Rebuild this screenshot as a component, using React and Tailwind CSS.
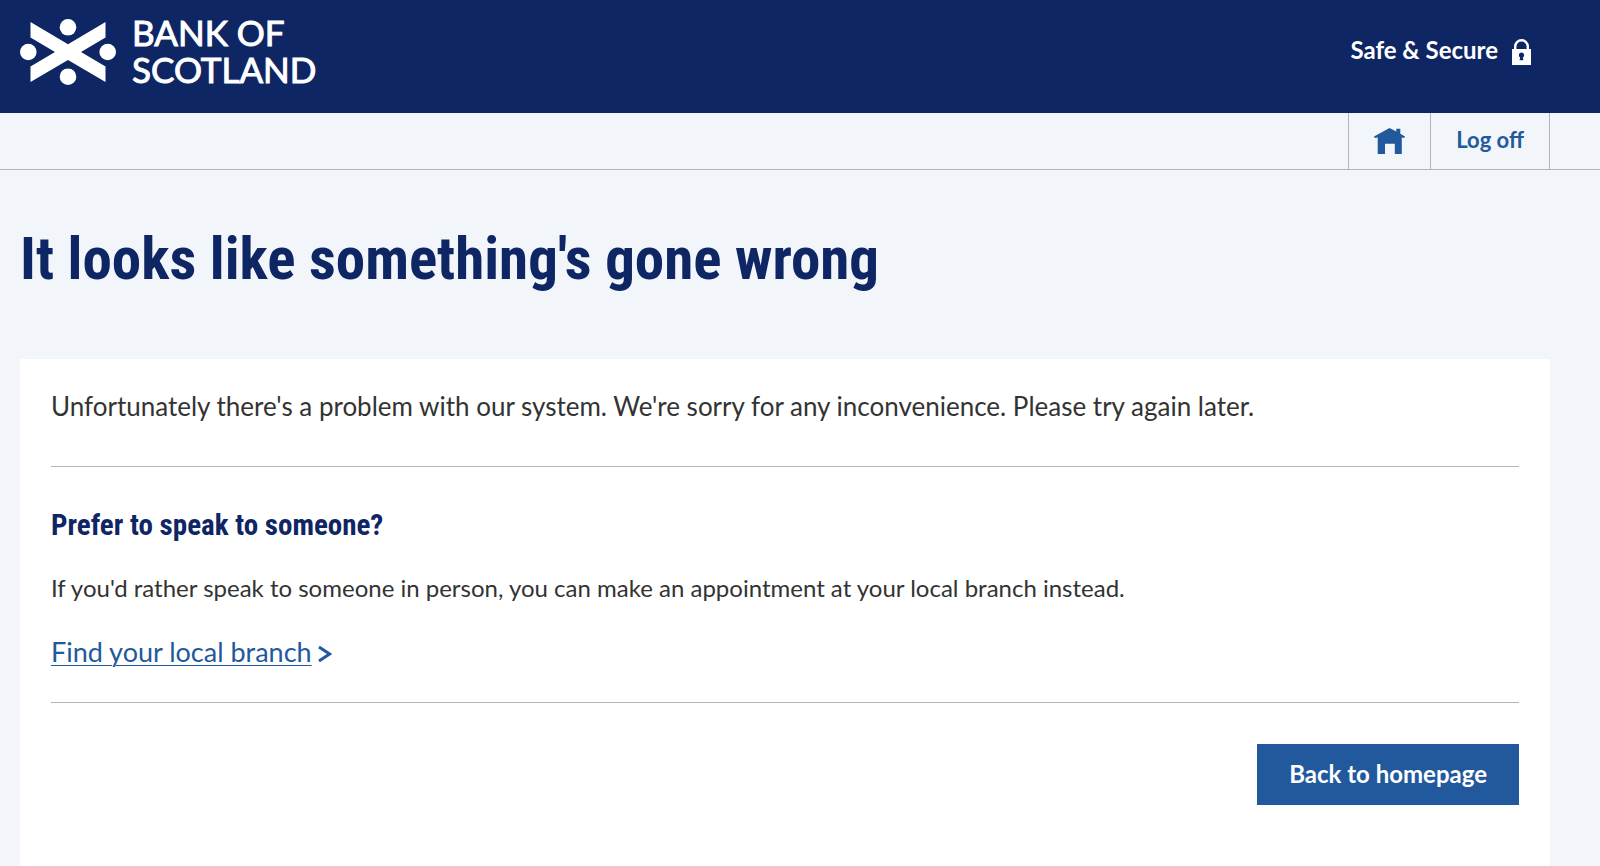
function Logo() {
  return (
    <svg viewBox="0 0 96 66" className="mt-0.5 h-[66px] w-24" fill="currentColor" aria-hidden="true">
      <path d="M10.500 3 48 25.200 85.500 3V18.500L61 33 85.500 47.500V63L48 41 10.500 63V47.500L35 33 10.500 18.500Z" />
      <circle cx="48" cy="8.300" r="8.300" />
      <circle cx="48" cy="57.700" r="8.300" />
      <circle cx="8.300" cy="33" r="8.300" />
      <circle cx="87.700" cy="33" r="8.300" />
    </svg>
  )
}

function LockIcon() {
  return (
    <svg viewBox="0 0 19 26" className="mt-1 h-[26px] w-[19px]" aria-hidden="true">
      <path d="M3.200 12V7.500a6.300 6.300 0 0 1 12.600 0V12" fill="none" stroke="#fff" strokeWidth="2.400" />
      <path d="M0 10H19V26H0Z" fill="#fff" />
      <path d="M9.500 13.500a2.700 2.700 0 0 0-1.400 5L7.600 21.300H11.400L10.900 18.500a2.700 2.700 0 0 0-1.400-5Z" fill="#0f2664" />
    </svg>
  )
}

function HomeIcon() {
  return (
    <svg viewBox="0 0 31 26" className="h-[26px] w-[31px]" fill="currentColor" aria-hidden="true">
      <path d="M15.500 0 22.300 3.600V0.800H26.300V5.800L31 8.500 30.200 10 27.800 9.400V26H20.800V15.700H11V26H3.700V9.400L0.800 10 0 8.500Z" />
    </svg>
  )
}

function Header() {
  return (
    <header className="flex items-start justify-between bg-[#0f2664] pt-[14px] pr-[69px] pb-[25px] pl-5 text-white">
      <a href="#" className="flex items-center gap-4">
        <Logo />
        <span className="text-[35px] leading-[37px] [-webkit-text-stroke:1px_white]">
          BANK OF
          <br />
          SCOTLAND
        </span>
      </a>
      <div className="flex items-center gap-[14px] pt-5">
        <span className="text-2xl font-bold">Safe &amp; Secure</span>
        <LockIcon />
      </div>
    </header>
  )
}

function NavBar() {
  return (
    <nav className="flex h-[57px] justify-end border-b border-[#b3b5b7] pr-[50px] text-[#22599d]">
      <a href="#" aria-label="Home" className="flex items-center border-l border-[#b3b5b7] px-[25px]">
        <HomeIcon />
      </a>
      <a href="#" className="flex items-center border-x border-[#b3b5b7] px-[25px] pb-1 text-[22px] font-bold">
        Log off
      </a>
    </nav>
  )
}

export default function App() {
  return (
    <div className="flex min-h-screen flex-col bg-[#f2f5f9] font-['Lato','Liberation_Sans',sans-serif] text-[#333]">
      <Header />
      <NavBar />
      <main className="flex flex-1 flex-col pr-[50px] pl-5">
        <h1 className="pt-[53px] pb-16 font-['Roboto_Condensed','Liberation_Sans_Narrow',sans-serif] text-[59px] leading-[72px] font-bold text-[#0f2664]">
          It looks like something's gone wrong
        </h1>
        <div className="flex-1 bg-white px-[31px] pt-7 pb-10">
          <p className="pb-[41px] text-[26px] leading-[38px]">
            Unfortunately there's a problem with our system. We're sorry for any inconvenience. Please try again later.
          </p>
          <section className="border-y border-[#b3b5b7] pt-10 pb-8">
            <h2 className="font-['Roboto_Condensed','Liberation_Sans_Narrow',sans-serif] text-[29px] leading-9 font-bold text-[#0f2664]">
              Prefer to speak to someone?
            </h2>
            <p className="pt-[27px] text-2xl leading-9">
              If you'd rather speak to someone in person, you can make an appointment at your local branch instead.
            </p>
            <a href="#" className="mt-7 flex items-center gap-1.5 text-[27px] leading-9 text-[#22599d]">
              <span className="underline decoration-1 underline-offset-3">Find your local branch</span>
              <svg viewBox="0 0 14 18" className="mt-1 h-[18px] w-[14px]" fill="none" stroke="currentColor" strokeWidth="3" aria-hidden="true">
                <path d="M1 2 11.500 9 1 16" />
              </svg>
            </a>
          </section>
          <div className="flex justify-end pt-[41px]">
            <button type="button" className="bg-[#22599d] px-8 pt-3 pb-[13px] text-2xl leading-9 font-bold text-white">
              Back to homepage
            </button>
          </div>
        </div>
      </main>
    </div>
  )
}
